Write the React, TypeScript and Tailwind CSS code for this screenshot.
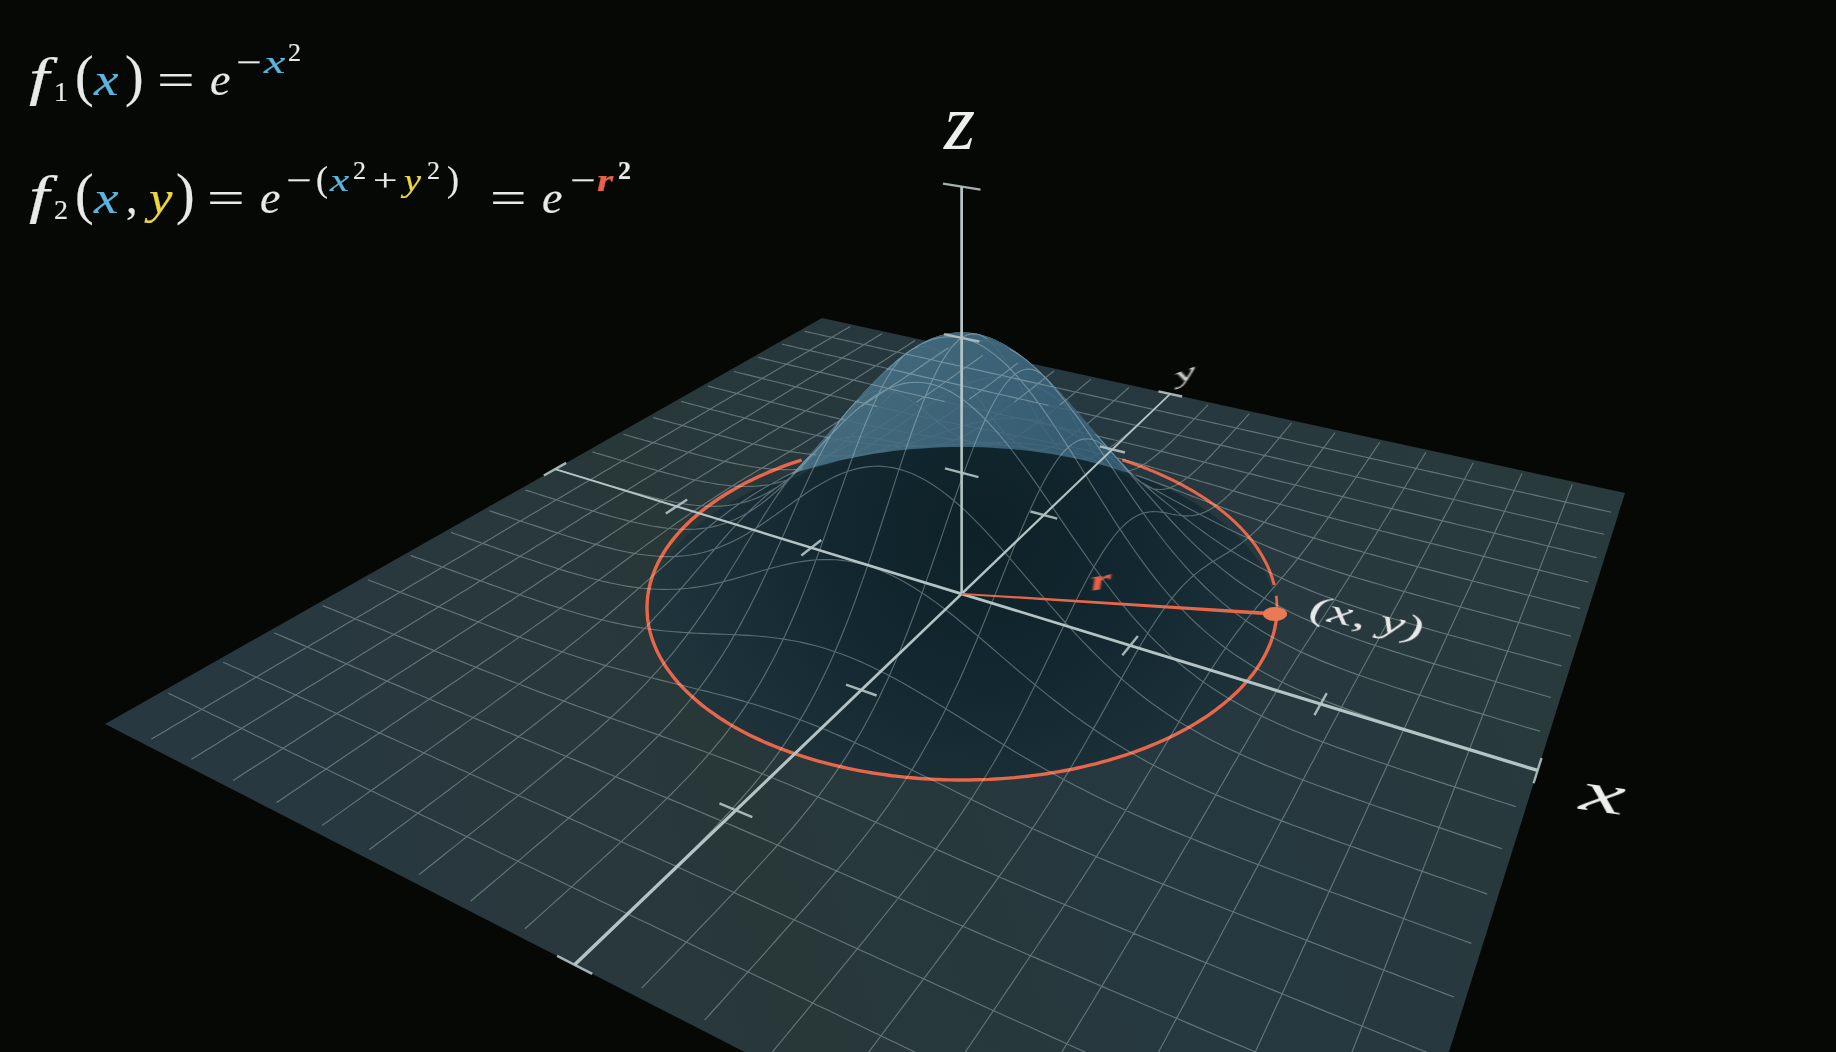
import React from "react";

type P = [number, number];
const corners: P[] = [[105, 724], [1351, 1363], [1625, 493], [822, 318]];
function makeH() {
  const [[x0, y0], [x1, y1], [x2, y2], [x3, y3]] = corners;
  const dx1 = x1 - x2, dx2 = x3 - x2, sx = x0 - x1 + x2 - x3;
  const dy1 = y1 - y2, dy2 = y3 - y2, sy = y0 - y1 + y2 - y3;
  const den = dx1 * dy2 - dx2 * dy1;
  const g = (sx * dy2 - dx2 * sy) / den, h = (dx1 * sy - sx * dy1) / den;
  const a = x1 - x0 + g * x1, b = x3 - x0 + h * x3, c = x0;
  const d = y1 - y0 + g * y1, e = y3 - y0 + h * y3, f = y0;
  const w0 = g / 2 + h / 2 + 1;
  return {
    A: a / 6 / w0, B: b / 6 / w0, C: (a / 2 + b / 2 + c) / w0,
    D: d / 6 / w0, E: e / 6 / w0, F: (d / 2 + e / 2 + f) / w0,
    G: g / 6 / w0, H: h / 6 / w0,
  };
}
const M = makeH();
const K = -0.0513;
const CY = -145.3;
const CX = M.C * K;
function proj(x: number, y: number, z = 0): P {
  const w = M.G * x + M.H * y + 1 + K * z;
  return [(M.A * x + M.B * y + M.C + CX * z) / w, (M.D * x + M.E * y + M.F + CY * z) / w];
}
const det3 = (a: number, b: number, c: number, d: number, e: number, f: number, g: number, h: number, i: number) =>
  a * (e * i - f * h) - b * (d * i - f * g) + c * (d * h - e * g);
const D0 = det3(M.A, M.B, CX, M.D, M.E, CY, M.G, M.H, K);
const cam = [
  det3(-M.C, M.B, CX, -M.F, M.E, CY, -1, M.H, K) / D0,
  det3(M.A, -M.C, CX, M.D, -M.F, CY, M.G, -1, K) / D0,
  det3(M.A, M.B, -M.C, M.D, M.E, -M.F, M.G, M.H, -1) / D0,
];
const bump = (x: number, y: number) => 2 * Math.exp(-(x * x + y * y));
function occluded(x: number, y: number) {
  const z = bump(x, y);
  if (z < 0.004) return false;
  const vx = cam[0] - x, vy = cam[1] - y, vz = cam[2] - z;
  const l = Math.hypot(vx, vy, vz);
  for (let s = 0.06; s < 5; s += 0.06) {
    const qx = x + (vx / l) * s, qy = y + (vy / l) * s, qz = z + (vz / l) * s;
    if (qz > 2.1) break;
    if (qz < bump(qx, qy) - 0.008) return true;
  }
  return false;
}
const fmt = (p: P) => `${p[0].toFixed(1)} ${p[1].toFixed(1)}`;
const pathOf = (pts: P[]) => "M" + pts.map(fmt).join("L");

function meshLines() {
  const vis: string[] = [];
  const hid: string[] = [];
  const e = 2.96;
  const N = 160;
  const run = (fn: (t: number) => [number, number]) => {
    let cur: P[] = [];
    let state = false;
    for (let i = 0; i <= N; i++) {
      const t = -e + (2 * e * i) / N;
      const [x, y] = fn(t);
      const o = occluded(x, y);
      const p = proj(x, y, bump(x, y));
      if (i > 0 && o !== state) {
        cur.push(p);
        (state ? hid : vis).push(pathOf(cur));
        cur = [];
      }
      state = o;
      cur.push(p);
    }
    if (cur.length > 1) (state ? hid : vis).push(pathOf(cur));
  };
  for (let k = -9; k <= 9; k++) {
    const c = k * 0.3;
    run((t) => [t, c]);
    run((t) => [c, t]);
  }
  return { vis: vis.join(""), hid: hid.join("") };
}
const mesh = meshLines();
function silhouette() {
  let d = "";
  const Z0 = 0.42;
  const rings = 24, seg = 72;
  const rmax = Math.sqrt(Math.log(2 / Z0));
  for (let i = 0; i < rings; i++) {
    for (let j = 0; j < seg; j++) {
      const r1 = (rmax * i) / rings, r2 = (rmax * (i + 1)) / rings;
      const t1 = (j / seg) * Math.PI * 2, t2 = ((j + 1) / seg) * Math.PI * 2;
      const pt = (r: number, t: number) => {
        const x = r * Math.cos(t), y = r * Math.sin(t);
        return proj(x, y, bump(x, y));
      };
      let q = [pt(r1, t1), pt(r2, t1), pt(r2, t2), pt(r1, t2)];
      let area = 0;
      q.forEach((p, n) => {
        const o = q[(n + 1) % 4];
        area += p[0] * o[1] - o[0] * p[1];
      });
      if (area < 0) q = q.reverse();
      d += pathOf(q) + "Z";
    }
  }
  return d;
}
const DOT: P = [1275, 614];
const deg = Math.PI / 180;
function ring(cy: number, from: number, to: number, close = false) {
  const pts: P[] = [];
  for (let i = 0; i <= 200; i++) {
    const t = (from + ((to - from) * i) / 200) * deg;
    pts.push([962 + 315 * Math.cos(t), cy + 172 * Math.sin(t)]);
  }
  return pathOf(pts) + (close ? "Z" : "");
}
function taper(a: P, b: P, w1: number, w2: number) {
  const dx = b[0] - a[0], dy = b[1] - a[1];
  const l = Math.hypot(dx, dy);
  const nx = -dy / l, ny = dx / l;
  return `${a[0] + (nx * w1) / 2},${a[1] + (ny * w1) / 2} ${b[0] + (nx * w2) / 2},${b[1] + (ny * w2) / 2} ${b[0] - (nx * w2) / 2},${b[1] - (ny * w2) / 2} ${a[0] - (nx * w1) / 2},${a[1] - (ny * w1) / 2}`;
}
const ticks: [P, P][] = [];
[-3, -2, -1, 1, 2, 3].forEach((t) => {
  ticks.push([proj(t, -0.1), proj(t, 0.1)]);
  ticks.push([proj(-0.09, t), proj(0.09, t)]);
});
[1, 2, 3].forEach((t) => ticks.push([proj(-0.1, 0, t), proj(0.1, 0, t)]));

function Scene() {
  return (
    <svg className="absolute inset-0 blur-[0.4px]" width={1836} height={1052} viewBox="0 0 1836 1052">
      <defs>
        <linearGradient id="pl" gradientUnits="userSpaceOnUse" x1="300" y1="900" x2="1500" y2="500">
          <stop offset="0" stopColor="#283841" />
          <stop offset="0.35" stopColor="#283839" />
          <stop offset="0.65" stopColor="#263840" />
          <stop offset="1" stopColor="#283a3c" />
        </linearGradient>
        <linearGradient id="bp" gradientUnits="userSpaceOnUse" x1="820" y1="360" x2="1100" y2="480">
          <stop offset="0" stopColor="#456b7e" />
          <stop offset="1" stopColor="#345a70" />
        </linearGradient>
        <radialGradient id="dk" gradientUnits="userSpaceOnUse" cx="985" cy="530" r="340">
          <stop offset="0" stopColor="#0e2129" />
          <stop offset="0.45" stopColor="#12272f" />
          <stop offset="1" stopColor="#20343c" />
        </radialGradient>
        <clipPath id="cc">
          <path d={ring(608, 0, 360, true)} />
        </clipPath>
      </defs>
      <polygon points={corners.map((p) => p.join(",")).join(" ")} fill="url(#pl)" />
      <path d={silhouette()} fill="url(#bp)" stroke="url(#bp)" strokeWidth="0.6" />
      <path d={ring(619, 0, 360, true)} fill="url(#dk)" clipPath="url(#cc)" />
      <g fill="none" stroke="#e8674a">
        <path d={ring(608, 2, 239.4)} strokeWidth="3.4" />
        <path d={ring(608, 300.6, 352.3)} strokeWidth="3" />
        <path d={ring(608, -4, 2)} strokeWidth="2.6" />
      </g>
      <path d={mesh.hid} fill="none" stroke="#d2e6e6" strokeOpacity="0.07" strokeWidth="1.1" />
      <path d={mesh.vis} fill="none" stroke="#d2e6e6" strokeOpacity="0.35" strokeWidth="1.15" />
      <g fill="#b4c4c4">
        <polygon points={taper(proj(3, 0), proj(0, 0), 3.4, 2.8)} />
        <polygon points={taper(proj(0, 0), proj(-3, 0), 2.8, 1.7)} />
        <polygon points={taper(proj(0, -3), proj(0, 0), 3.6, 2.6)} />
        <polygon points={taper(proj(0, 0), proj(0, 3), 2.6, 1.6)} />
        <polygon points={taper(proj(0, 0), proj(0, 0, 3), 2.6, 2.8)} />
      </g>
      <g stroke="#b4c4c4" strokeWidth="2.4" opacity="0.9">
        {ticks.map(([a, b], i) => (
          <line key={i} x1={a[0]} y1={a[1]} x2={b[0]} y2={b[1]} />
        ))}
      </g>
      <polygon points={taper(proj(0, 0), DOT, 1.8, 3.8)} fill="#e8674a" />
      <ellipse cx={DOT[0]} cy={DOT[1]} rx="12" ry="7" fill="#e97a55" />
    </svg>
  );
}

const M46 = "text-[46px]";
const EXP = "text-[32px] -translate-y-[22px]";
const SUP = "text-[26px] -translate-y-[34px]";
const SUB = "text-[28px] translate-y-[6px]";
const BLUE = "text-[#5cb5dc]";
const YEL = "text-[#ecd83c]";
const RED = "text-[#e8604a]";

function Equations() {
  return (
    <div className="absolute left-0 top-[17px] text-[#e9e9e9] leading-[118px] blur-[0.4px] [-webkit-text-stroke:0.2px_currentColor] [font-family:'Liberation_Serif',serif]">
      <div className="flex h-[118px] items-baseline pl-[29px]">
        <span className="w-[25px] shrink-0 italic origin-left scale-x-[1.4] text-[52px]">f</span>
        <span className={`w-[21px] shrink-0 ${SUB}`}>1</span>
        <span className="w-[19px] shrink-0 text-[56px]">(</span>
        <span className={`w-[31px] shrink-0 italic origin-left scale-x-[1.2] ${M46} ${BLUE}`}>x</span>
        <span className="w-[32px] shrink-0 text-[56px]">)</span>
        <span className={`w-[53px] shrink-0 origin-left scale-x-[1.45] ${M46}`}>=</span>
        <span className={`w-[26px] shrink-0 italic ${M46}`}>e</span>
        <span className={`w-[28px] shrink-0 origin-left scale-x-[1.4] ${EXP}`}>−</span>
        <span className={`w-[24px] shrink-0 italic origin-left scale-x-[1.5] ${EXP} ${BLUE}`}>x</span>
        <span className={`shrink-0 ${SUP}`}>2</span>
      </div>
      <div className="flex h-[118px] items-baseline pl-[29px]">
        <span className="w-[25px] shrink-0 italic origin-left scale-x-[1.4] text-[52px]">f</span>
        <span className={`w-[21px] shrink-0 ${SUB}`}>2</span>
        <span className="w-[19px] shrink-0 text-[56px]">(</span>
        <span className={`w-[32px] shrink-0 italic origin-left scale-x-[1.2] ${M46} ${BLUE}`}>x</span>
        <span className={`w-[23px] shrink-0 ${M46}`}>,</span>
        <span className={`w-[27px] shrink-0 italic origin-left scale-x-[1.15] ${M46} ${YEL}`}>y</span>
        <span className="w-[31px] shrink-0 text-[56px]">)</span>
        <span className={`w-[53px] shrink-0 origin-left scale-x-[1.45] ${M46}`}>=</span>
        <span className={`w-[26px] shrink-0 italic ${M46}`}>e</span>
        <span className={`w-[30px] shrink-0 origin-left scale-x-[1.4] ${EXP}`}>−</span>
        <span className="w-[14px] shrink-0 text-[36px] -translate-y-[22px]">(</span>
        <span className={`w-[23px] shrink-0 italic origin-left scale-x-[1.35] ${EXP} ${BLUE}`}>x</span>
        <span className={`w-[20px] shrink-0 ${SUP}`}>2</span>
        <span className={`w-[31px] shrink-0 origin-left scale-x-[1.35] ${EXP}`}>+</span>
        <span className={`w-[23px] shrink-0 italic origin-left scale-x-[1.2] ${EXP} ${YEL}`}>y</span>
        <span className={`w-[20px] shrink-0 ${SUP}`}>2</span>
        <span className="w-[43px] shrink-0 text-[36px] -translate-y-[22px]">)</span>
        <span className={`w-[52px] shrink-0 origin-left scale-x-[1.4] ${M46}`}>=</span>
        <span className={`w-[28px] shrink-0 italic ${M46}`}>e</span>
        <span className={`w-[27px] shrink-0 origin-left scale-x-[1.4] ${EXP}`}>−</span>
        <span className={`w-[21px] shrink-0 font-bold italic origin-left scale-x-[1.3] ${EXP} ${RED}`}>r</span>
        <span className={`shrink-0 font-bold ${SUP}`}>2</span>
      </div>
    </div>
  );
}

function Labels() {
  const base = "absolute whitespace-nowrap leading-none italic blur-[0.4px] [font-family:'Liberation_Serif',serif]";
  return (
    <>
      <span className={`${base} left-[944px] top-[82px] text-[80px] text-[#eeeeee]`}>z</span>
      <span className={`${base} left-[1581px] top-[762px] text-[56px] text-[#eeeeee] origin-left rotate-[8deg] scale-x-[1.8]`}>x</span>
      <span className={`${base} left-[1175px] top-[366px] text-[22px] text-[#e4e4e4] origin-left -rotate-[20deg] scale-x-[2.2]`}>y</span>
      <span className={`${base} left-[1310px] top-[590px] text-[34px] text-[#e9e9e9] origin-left rotate-[11deg] scale-x-[1.65]`}>(x, y)</span>
      <span className={`${base} left-[1090px] top-[568px] font-bold text-[28px] text-[#e8604a] origin-left -rotate-[10deg] scale-x-[2]`}>r</span>
    </>
  );
}

export default function App() {
  return (
    <div className="relative w-[1836px] h-[1052px] overflow-hidden bg-[#060806]">
      <Scene />
      <Equations />
      <Labels />
    </div>
  );
}
